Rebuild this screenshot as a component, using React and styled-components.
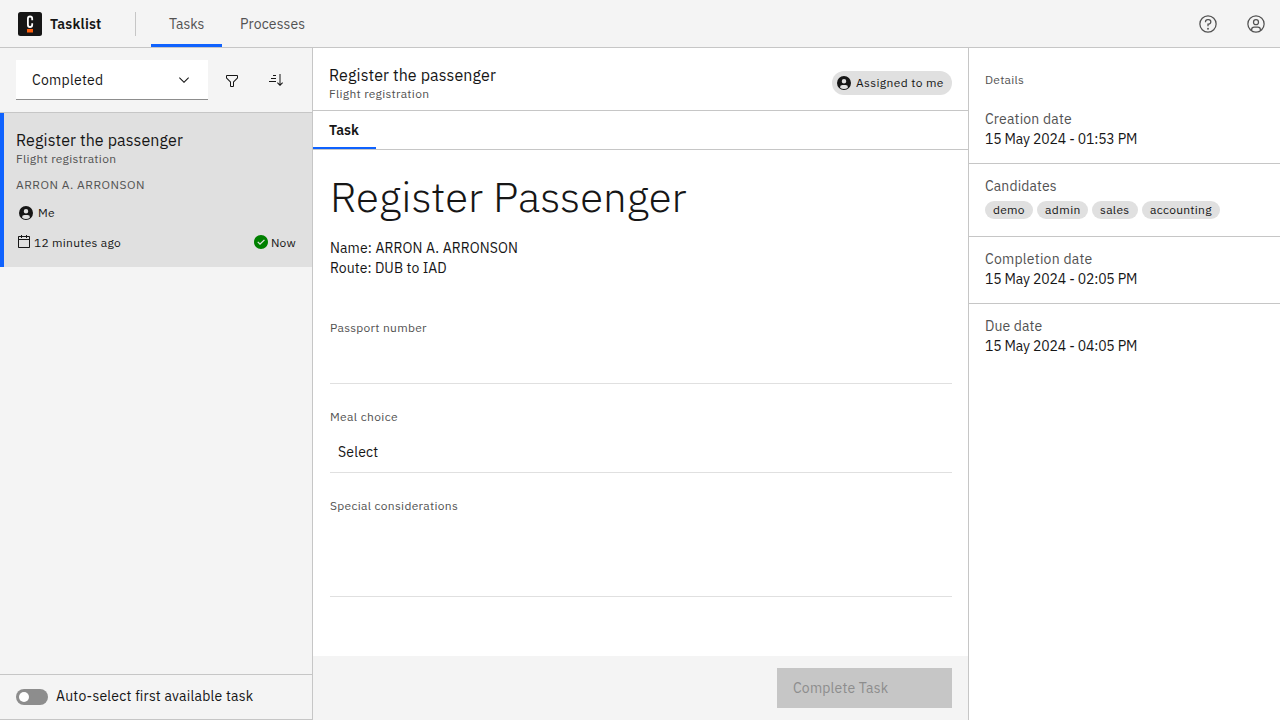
import React from "react";
import styled, { createGlobalStyle } from "styled-components";

const GlobalStyle = createGlobalStyle`
  *, *::before, *::after { box-sizing: border-box; }
  body {
    margin: 0;
    font-family: "IBM Plex Sans", Roboto, "Noto Sans", sans-serif;
    font-size: 14px;
    line-height: 20px;
    color: #161616;
    background: #fff;
  }
  h1, h2, p { margin: 0; }
  button { font: inherit; border: 0; padding: 0; background: none; color: inherit; }
  svg { display: block; flex: none; fill: currentColor; }
`;

const Page = styled.div`
  display: flex;
  flex-direction: column;
  height: 100vh;
  overflow: hidden;
`;

/* text */
const Text = styled.span`
  display: block;
  white-space: nowrap;
  font-size: ${(p) => p.$size || 14}px;
  line-height: ${(p) => p.$line || 20}px;
  font-weight: ${(p) => p.$weight || 400};
  letter-spacing: ${(p) => p.$track || 0}px;
  color: ${(p) => (p.$muted ? "#525252" : "inherit")};
`;

/* header */
const Header = styled.header`
  display: flex;
  align-items: stretch;
  height: 48px;
  flex: none;
  background: #f4f4f4;
  border-bottom: 1px solid #c6c6c6;
`;
const Brand = styled.div`
  display: flex;
  align-items: center;
  gap: 8px;
  width: 135px;
  padding: 1px 0 0 18px;
`;
const Divider = styled.div`
  align-self: center;
  width: 1px;
  height: 24px;
  margin: 1px 15px 0 0;
  background: #c6c6c6;
`;
const Nav = styled.nav`
  display: flex;
  flex: 1;
`;
const NavItem = styled.div`
  display: flex;
  align-items: center;
  width: ${(p) => p.$width}px;
  padding: ${(p) => (p.$active ? "4px 0 0 18px" : "1px 0 0 18px")};
  border-bottom: ${(p) => (p.$active ? "3px solid #0f62fe" : "0")};
`;
const HeaderActions = styled.div`
  display: flex;
  color: #525252;
`;
const HeaderButton = styled.button`
  display: flex;
  align-items: center;
  justify-content: center;
  width: 48px;
  padding-top: 1px;
`;

/* body */
const Body = styled.main`
  display: grid;
  grid-template-columns: 313px 655px 1fr;
  flex: 1;
  min-height: 0;
`;
const Side = styled.aside`
  display: flex;
  flex-direction: column;
  background: #f4f4f4;
  border-right: 1px solid #c6c6c6;
`;
const FilterBar = styled.div`
  display: flex;
  align-items: center;
  height: 65px;
  padding: 0 12px 1px 16px;
  border-bottom: 1px solid #c6c6c6;
`;
const Dropdown = styled.div`
  display: flex;
  align-items: center;
  justify-content: space-between;
  width: 192px;
  height: 40px;
  margin-right: 4px;
  padding: 1px 16px 0;
  background: #fff;
  border-bottom: 1px solid #8d8d8d;
`;
const IconButton = styled.button`
  display: flex;
  align-items: center;
  justify-content: center;
  width: 40px;
  height: 40px;
  margin-right: 4px;
  padding-top: ${(p) => p.$drop || 0}px;
`;
const TaskCard = styled.article`
  height: 154px;
  padding: 17px 16px 0 12px;
  background: #e0e0e0;
  border-left: 4px solid #0f62fe;
`;
const Customer = styled.div`
  margin-top: 10px;
`;
const CardRow = styled.div`
  display: flex;
  align-items: center;
  justify-content: space-between;
  height: 16px;
  margin-top: ${(p) => p.$top}px;
`;
const Pair = styled.div`
  display: flex;
  align-items: center;
  gap: ${(p) => p.$gap}px;
  padding-left: ${(p) => p.$pad || 0}px;
`;
const SideFooter = styled.footer`
  display: flex;
  align-items: center;
  gap: 8px;
  height: 46px;
  margin-top: auto;
  padding-left: 16px;
  border-top: 1px solid #c6c6c6;
  border-bottom: 1px solid #c6c6c6;
`;
const ToggleLabel = styled.label`
  padding-bottom: 2px;
`;
const Toggle = styled.div`
  width: 32px;
  height: 16px;
  padding: 3px;
  border-radius: 8px;
  background: #8d8d8d;
  &::before {
    content: "";
    display: block;
    width: 10px;
    height: 10px;
    border-radius: 50%;
    background: #fff;
  }
`;

/* task */
const Task = styled.section`
  display: flex;
  flex-direction: column;
  min-width: 0;
`;
const TaskHeader = styled.div`
  display: flex;
  align-items: flex-start;
  justify-content: space-between;
  height: 63px;
  padding: 17px 16px 0;
  border-bottom: 1px solid #c6c6c6;
`;
const Assignee = styled.div`
  display: flex;
  align-items: center;
  gap: 4px;
  height: 24px;
  width: 120px;
  margin-top: 6px;
  padding-left: 4px;
  border-radius: 12px;
  background: #e0e0e0;
`;
const Tabs = styled.div`
  display: flex;
  height: 39px;
  border-bottom: 1px solid #c6c6c6;
`;
const Tab = styled.div`
  width: 63px;
  padding: 9px 0 0 16px;
  border-bottom: 2px solid #0f62fe;
`;
const Form = styled.form`
  flex: 1;
  padding: 22px 16px 0 17px;
`;
const Title = styled.h1`
  font-size: 42px;
  line-height: 50px;
  font-weight: 300;
  letter-spacing: 0.04px;
  white-space: nowrap;
`;
const Summary = styled.div`
  margin: 16px 0 42px;
`;
const Field = styled.div`
  display: flex;
  flex-direction: column;
  height: ${(p) => p.$height}px;
  margin-bottom: 25px;
  border-bottom: 1px solid #e0e0e0;
`;
const FieldValue = styled.div`
  margin: 17px 0 0 8px;
`;
const TaskFooter = styled.footer`
  display: flex;
  justify-content: flex-end;
  height: 64px;
  padding: 12px 16px;
  background: #f4f4f4;
`;
const CompleteButton = styled.button`
  display: flex;
  align-items: center;
  width: 175px;
  padding-left: 16px;
  background: #c6c6c6;
  color: #8d8d8d;
`;

/* details */
const Details = styled.aside`
  border-left: 1px solid #c6c6c6;
`;
const DetailsTitle = styled.div`
  height: 45px;
  padding: 24px 16px 0;
`;
const DetailsItem = styled.div`
  height: ${(p) => p.$height}px;
  padding: ${(p) => (p.$first ? 16 : 12)}px 16px 0;
  border-bottom: ${(p) => (p.$last ? "0" : "1px solid #c6c6c6")};
`;
const Tags = styled.div`
  display: flex;
  gap: 4px;
  margin-top: 5px;
`;
const Tag = styled.div`
  height: 18px;
  width: ${(p) => p.$width}px;
  padding: 0 8px;
  border-radius: 9px;
  background: #e0e0e0;
`;

const Icon = ({ size = 16, box = 32, children }) => (
  <svg width={size} height={size} viewBox={`0 0 ${box} ${box}`}>{children}</svg>
);
const Logo = () => (
  <svg width="24" height="24" viewBox="0 0 24 24">
    <rect width="24" height="24" rx="2.5" fill="#161616" />
    <path d="M14.2 8.2V6.8C14.2 5.1 13.5 4.5 12 4.5S9.9 5.1 9.9 6.8V12.7C9.9 14.4 10.5 15 12 15S14.2 14.4 14.2 12.7V11.3" fill="none" stroke="#fff" strokeWidth="1.8" />
    <rect x="9" y="17" width="6" height="3.5" fill="#fc5d0d" />
  </svg>
);
const Help = () => (
  <Icon size={20}>
    <path d="M16,2A14,14,0,1,0,30,16,14,14,0,0,0,16,2Zm0,26A12,12,0,1,1,28,16,12,12,0,0,1,16,28Z" />
    <circle cx="16" cy="23.5" r="1.5" />
    <path d="M17,8H15.5A4.49,4.49,0,0,0,11,12.5V13h2v-.5A2.5,2.5,0,0,1,15.5,10H17a2.5,2.5,0,0,1,0,5H15v4.5h2V17a4.5,4.5,0,0,0,0-9Z" />
  </Icon>
);
const UserAvatar = () => (
  <Icon size={20}>
    <path d="M16,8a5,5,0,1,0,5,5A5,5,0,0,0,16,8Zm0,8a3,3,0,1,1,3-3A3.0034,3.0034,0,0,1,16,16Z" />
    <path d="M16,2A14,14,0,1,0,30,16,14.0158,14.0158,0,0,0,16,2ZM10,26.3765V25a3.0033,3.0033,0,0,1,3-3h6a3.0033,3.0033,0,0,1,3,3v1.3765a11.8989,11.8989,0,0,1-12,0Zm13.9925-1.4507A5.0016,5.0016,0,0,0,19,20H13a5.0016,5.0016,0,0,0-4.9925,4.9258,12,12,0,1,1,15.985,0Z" />
  </Icon>
);
const UserFilled = () => (
  <Icon>
    <path fillRule="evenodd" d="M16 2A14 14 0 1 0 30 16 14 14 0 0 0 16 2ZM16 8A4.5 4.5 0 1 1 11.5 12.5 4.5 4.5 0 0 1 16 8ZM8.007 24.93A4.996 4.996 0 0 1 13 20H19A4.996 4.996 0 0 1 23.994 24.93 11.94 11.94 0 0 1 8.007 24.93Z" />
  </Icon>
);
const ChevronDown = () => (
  <Icon box={16}><path d="M8 11L3 6 3.7 5.3 8 9.6 12.3 5.3 13 6z" /></Icon>
);
const Filter = () => (
  <Icon><path d="M18,28H14a2,2,0,0,1-2-2V18.41L4.59,11A2,2,0,0,1,4,9.59V6A2,2,0,0,1,6,4H26a2,2,0,0,1,2,2V9.59A2,2,0,0,1,27.41,11L20,18.41V26A2,2,0,0,1,18,28ZM6,6V9.59l8,8V26h4V17.59l8-8V6Z" /></Icon>
);
const Sort = () => (
  <Icon><path d="M18 22L19.414 20.586 23 24.172 23 4 25 4 25 24.172 28.586 20.586 30 22 24 28 18 22zM2 18H16V20H2zM6 12H16V14H6zM10 6H16V8H10z" /></Icon>
);
const Calendar = () => (
  <Icon><path d="M26,4h-4V2h-2v2h-8V2h-2v2H6C4.9,4,4,4.9,4,6v20c0,1.1,0.9,2,2,2h20c1.1,0,2-0.9,2-2V6C28,4.9,27.1,4,26,4z M26,26H6V12h20V26z M26,10H6V6h4v2h2V6h8v2h2V6h4V10z" /></Icon>
);
const Check = () => (
  <Icon box={16}><path fill="#008000" d="M8,1C4.1,1,1,4.1,1,8c0,3.9,3.1,7,7,7s7-3.1,7-7C15,4.1,11.9,1,8,1z M7,11L4.3,8.3l0.9-0.8L7,9.3l4-3.9l0.9,0.8L7,11z" /></Icon>
);
const RowText = styled(Text)`
  padding-top: 2px;
`;

const details = [
  { label: "Creation date", track: 0.17, value: "15 May 2024 - 01:53 PM", height: 71, first: true },
  { label: "Candidates", track: 0.1, height: 73, tags: [["demo", 48, 0.25], ["admin", 51, 0.44], ["sales", 46, 0.3], ["accounting", 78, 0.27]] },
  { label: "Completion date", track: 0.23, value: "15 May 2024 - 02:05 PM", height: 67 },
  { label: "Due date", track: 0.1, value: "15 May 2024 - 04:05 PM", height: 67, last: true },
];

export default function App() {
  return (
    <Page>
      <GlobalStyle />
      <Header>
        <Brand><Logo /><Text $weight={600} $track={0.2}>Tasklist</Text></Brand>
        <Divider />
        <Nav>
          <NavItem $active $width={71}><Text $muted>Tasks</Text></NavItem>
          <NavItem $width={100}><Text $muted $track={0.15}>Processes</Text></NavItem>
        </Nav>
        <HeaderActions>
          <HeaderButton><Help /></HeaderButton>
          <HeaderButton><UserAvatar /></HeaderButton>
        </HeaderActions>
      </Header>
      <Body>
        <Side>
          <FilterBar>
            <Dropdown><Text $track={0.26}>Completed</Text><ChevronDown /></Dropdown>
            <IconButton $drop={2}><Filter /></IconButton>
            <IconButton><Sort /></IconButton>
          </FilterBar>
          <TaskCard>
            <Text $size={16} $line={21} $track={0.115}>Register the passenger</Text>
            <Text $size={12} $line={16} $track={0.28} $muted>Flight registration</Text>
            <Customer><Text $size={12} $line={16} $track={0.49} $muted>ARRON A. ARRONSON</Text></Customer>
            <CardRow $top={12}>
              <Pair $gap={4} $pad={2}><UserFilled /><Text $size={12} $line={16} $track={0.2}>Me</Text></Pair>
            </CardRow>
            <CardRow $top={13}>
              <Pair $gap={2}><Calendar /><RowText $size={12} $line={16} $track={0.27}>12 minutes ago</RowText></Pair>
              <Pair $gap={2}><Check /><RowText $size={12} $line={16} $track={0.25}>Now</RowText></Pair>
            </CardRow>
          </TaskCard>
          <SideFooter><Toggle /><ToggleLabel><Text $track={0.21}>Auto-select first available task</Text></ToggleLabel></SideFooter>
        </Side>
        <Task>
          <TaskHeader>
            <div>
              <Text $size={16} $line={21} $track={0.115}>Register the passenger</Text>
              <Text $size={12} $line={16} $track={0.28} $muted>Flight registration</Text>
            </div>
            <Assignee><UserFilled /><Text $size={12} $line={16} $track={0.37}>Assigned to me</Text></Assignee>
          </TaskHeader>
          <Tabs><Tab><Text $weight={600}>Task</Text></Tab></Tabs>
          <Form>
            <Title>Register Passenger</Title>
            <Summary>
              <Text $track={0.12}>Name: ARRON A. ARRONSON</Text>
              <Text $track={0.06}>Route: DUB to IAD</Text>
            </Summary>
            <Field $height={64}><Text $size={12} $line={16} $track={0.29} $muted>Passport number</Text></Field>
            <Field $height={64}>
              <Text $size={12} $line={16} $track={0.36} $muted>Meal choice</Text>
              <FieldValue><Text $track={0.2}>Select</Text></FieldValue>
            </Field>
            <Field $height={99}><Text $size={12} $line={16} $track={0.31} $muted>Special considerations</Text></Field>
          </Form>
          <TaskFooter><CompleteButton type="button" disabled><Text $track={0.18}>Complete Task</Text></CompleteButton></TaskFooter>
        </Task>
        <Details>
          <DetailsTitle><Text $size={12} $line={16} $track={0.25} $muted>Details</Text></DetailsTitle>
          {details.map((d) => (
            <DetailsItem key={d.label} $height={d.height} $first={d.first} $last={d.last}>
              <Text $track={d.track} $muted>{d.label}</Text>
              {d.value && <Text $track={-0.16}>{d.value}</Text>}
              {d.tags && (
                <Tags>
                  {d.tags.map(([name, width, track]) => (
                    <Tag key={name} $width={width}><Text $size={12} $line={18} $track={track}>{name}</Text></Tag>
                  ))}
                </Tags>
              )}
            </DetailsItem>
          ))}
        </Details>
      </Body>
    </Page>
  );
}
